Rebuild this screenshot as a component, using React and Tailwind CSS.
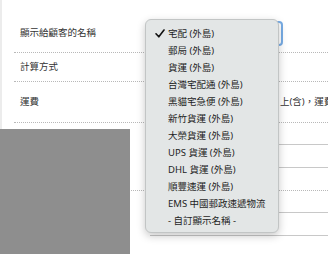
import React from "react";

const items = [
  "宅配 (外島)",
  "郵局 (外島)",
  "貨運 (外島)",
  "台灣宅配通 (外島)",
  "黑貓宅急便 (外島)",
  "新竹貨運 (外島)",
  "大榮貨運 (外島)",
  "UPS 貨運 (外島)",
  "DHL 貨運 (外島)",
  "順豐速運 (外島)",
  "EMS 中國郵政速遞物流",
  "- 自訂顯示名稱 -",
];

export default function App() {
  return (
    <div
      className="relative w-[328px] h-[254px] overflow-hidden bg-white text-[#333] text-[9.5px] leading-none"
      style={{ fontFamily: '"Noto Sans", "Noto Sans CJK TC", sans-serif' }}
    >
      <div className="h-full border-l-2 border-[#ececec] pl-[12px] pt-[14px]">
        {/* Row 1 */}
        <div className="flex h-[39px] items-center border-b border-dotted border-[#b8b8b8]">
          <div className="w-[136px] shrink-0 pl-[6px]">顯示給顧客的名稱</div>
          <div className="h-[25px] w-[133px] shrink-0 rounded-[4px] border-2 border-[#78ade6] bg-white"></div>
        </div>
        {/* Row 2 */}
        <div className="flex h-[29px] items-center border-b border-dotted border-[#b8b8b8]">
          <div className="w-[136px] shrink-0 pl-[6px]">計算方式</div>
        </div>
        {/* Row 3 */}
        <div className="flex h-[41px] items-center border-b border-dotted border-[#b8b8b8]">
          <div className="w-[136px] shrink-0 pl-[6px]">運費</div>
          <div className="flex items-center gap-[6px]">
            <div className="h-[24px] w-[124px] shrink-0 border border-[#c8c8c8]"></div>
            <span className="whitespace-nowrap">上(含)，運費</span>
          </div>
        </div>
        {/* Row 4 */}
        <div className="flex h-[68px] border-b border-dotted border-[#b8b8b8]">
          <div className="w-[136px] shrink-0"></div>
          <div className="pt-[21px]">
            <div className="h-[24px] w-[300px] border-y border-[#c8c8c8]"></div>
          </div>
        </div>
        {/* Row 5 */}
        <div className="flex h-[68px]">
          <div className="w-[136px] shrink-0"></div>
          <div className="pt-[21px]">
            <div className="h-[24px] w-[300px] border-y border-[#c8c8c8]"></div>
          </div>
        </div>
      </div>

      {/* redaction block */}
      <div className="absolute left-0 top-[129px] bottom-0 w-[130px] bg-[#8e8e8e]"></div>

      {/* dropdown menu */}
      <div className="absolute left-[145px] top-[19px] h-[214px] w-[134px] rounded-[6px] border border-[#c2c5c5] bg-[#e3e6e6] pt-[5px] shadow-[0_3px_8px_rgba(0,0,0,0.22)]">
        {items.map((t, i) => (
          <div key={i} className="relative flex h-[17px] items-center pl-[22px] whitespace-nowrap text-[#1e1e1e]">
            {i === 0 && (
              <svg
                className="absolute left-[9px] top-[4px]"
                width="10"
                height="9"
                viewBox="0 0 10 9"
                fill="none"
              >
                <path d="M1 4.8 L3.8 7.8 L9 1" stroke="#111" strokeWidth="1.6" strokeLinecap="round" strokeLinejoin="round" />
              </svg>
            )}
            {t}
          </div>
        ))}
      </div>
    </div>
  );
}
